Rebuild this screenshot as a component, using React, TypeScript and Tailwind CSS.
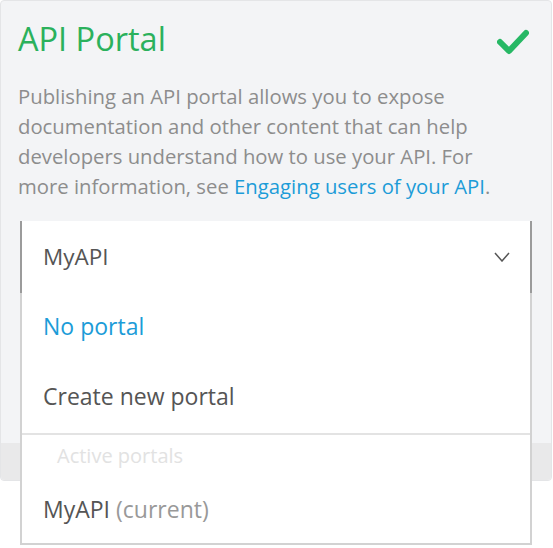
import React from "react";

export default function App() {
  return (
    <div className="w-[553px] h-[548px] bg-white relative overflow-hidden" style={{ fontFamily: '"Open Sans", "Noto Sans", sans-serif' }}>
      <div className="w-[552px] h-[481px] bg-[#f3f4f6] border border-[#e4e5e7] rounded-[4px] flex flex-col overflow-visible">
        <div className="flex-1 px-[17px] pt-[16px] flex flex-col">
          <div className="flex items-start justify-between">
            <h1 className="text-[32.5px] leading-[44px] text-[#2bb15c] font-normal">API Portal</h1>
            <svg width="32" height="26" viewBox="0 0 32 26" className="mt-[12px] mr-[5px]">
              <path d="M3 13 L12 22 L29 4" fill="none" stroke="#27b865" strokeWidth="6" strokeLinecap="round" strokeLinejoin="round" />
            </svg>
          </div>
          <p className="mt-[20px] w-[486px] text-[20.3px] leading-[30px] text-[#8d8d8d]">
            Publishing an API portal allows you to expose documentation and other content that can help developers understand how to use your API. For more information, see{" "}
            <span className="text-[#1c9cd8]">Engaging users of your API</span>.
          </p>
          <div className="relative mt-[20px] ml-[2px] w-[512px]">
            <div className="h-[72px] bg-white border-x-2 border-[#9b9b9b] flex items-center justify-between pl-[21px] pr-[20px]">
              <span className="text-[22.5px] text-[#555555]">MyAPI</span>
              <svg width="16" height="10" viewBox="0 0 16 10">
                <path d="M1 1 L8 9 L15 1" fill="none" stroke="#555" strokeWidth="1.5" />
              </svg>
            </div>
            <div className="absolute left-0 right-0 top-full bg-white border-x-2 border-b-2 border-[#d2d2d2] z-10">
              <div className="h-[70px] flex items-center pb-[3px] pl-[21px] text-[23px] text-[#1c9cd8]">No portal</div>
              <div className="h-[70px] flex items-center pb-[3px] pl-[21px] text-[23px] text-[#555555]">Create new portal</div>
              <div className="h-[2px] bg-[#e3e3e3]" />
              <div className="h-[44px] flex items-center pb-[3px] pl-[35px] text-[20px] text-[#e2e2e2]">Active portals</div>
              <div className="h-[64px] flex items-center pb-[3px] pl-[21px] text-[23px] text-[#555555]">
                MyAPI<span className="text-[#999999] ml-[6px]">(current)</span>
              </div>
            </div>
          </div>
        </div>
        <div className="h-[37px] bg-[#e9e9ea] rounded-b-[4px]" />
      </div>
    </div>
  );
}
